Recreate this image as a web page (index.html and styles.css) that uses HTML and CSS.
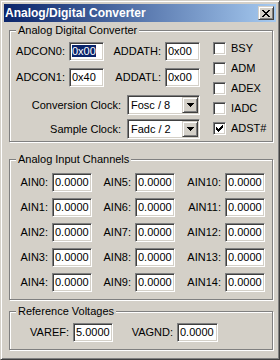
FILE: index.html
```html
<!DOCTYPE html>
<html lang="en">
<head>
    <meta charset="UTF-8">
    <meta name="viewport" content="width=device-width, initial-scale=1.0">
    <title>Analog/Digital Converter</title>
    <link rel="stylesheet" href="styles.css">
</head>
<body>
    <div class="window">
        <div class="titlebar">
            <span class="title">Analog/Digital Converter</span>
            <span class="close-btn">
                <svg width="8" height="7" viewBox="0 0 8 7" shape-rendering="crispEdges"><path d="M0 0h2v1h-2z M6 0h2v1h-2z M1 1h2v1h-2z M5 1h2v1h-2z M2 2h4v1h-4z M3 3h2v1h-2z M2 4h4v1h-4z M1 5h2v1h-2z M5 5h2v1h-2z M0 6h2v1h-2z M6 6h2v1h-2z"/></svg>
            </span>
        </div>

        <div class="client">
            <!-- A/D converter registers -->
            <fieldset class="group">
                <legend>Analog Digital Converter</legend>
                <div class="adc-body">
                    <div class="adc-left">
                        <div class="reg-grid">
                            <span class="lbl">ADCON0:</span><span class="edit"><span class="sel">0x00</span></span>
                            <span class="lbl">ADDATH:</span><span class="edit">0x00</span>
                            <span class="lbl">ADCON1:</span><span class="edit">0x40</span>
                            <span class="lbl">ADDATL:</span><span class="edit">0x00</span>
                        </div>
                        <div class="clock-row conv">
                            <span class="lbl clock-lbl">Conversion Clock:</span>
                            <span class="combo">
                                <span class="combo-text">Fosc / 8</span>
                                <span class="combo-btn"><svg width="7" height="4" viewBox="0 0 7 4" shape-rendering="crispEdges"><path d="M0 0h7v1h-7z M1 1h5v1h-5z M2 2h3v1h-3z M3 3h1v1h-1z"/></svg></span>
                            </span>
                        </div>
                        <div class="clock-row sample">
                            <span class="lbl clock-lbl">Sample Clock:</span>
                            <span class="combo">
                                <span class="combo-text">Fadc / 2</span>
                                <span class="combo-btn"><svg width="7" height="4" viewBox="0 0 7 4" shape-rendering="crispEdges"><path d="M0 0h7v1h-7z M1 1h5v1h-5z M2 2h3v1h-3z M3 3h1v1h-1z"/></svg></span>
                            </span>
                        </div>
                    </div>
                    <div class="flags">
                        <div class="flag"><span class="check"></span>BSY</div>
                        <div class="flag"><span class="check"></span>ADM</div>
                        <div class="flag"><span class="check"></span>ADEX</div>
                        <div class="flag"><span class="check"></span>IADC</div>
                        <div class="flag"><span class="check"><svg width="7" height="7" viewBox="0 0 7 7" shape-rendering="crispEdges"><path d="M6 0h1v1h-1z M5 1h2v1h-2z M0 2h1v1h-1z M4 2h3v1h-3z M0 3h2v1h-2z M3 3h3v1h-3z M0 4h5v1h-5z M1 5h3v1h-3z M2 6h1v1h-1z"/></svg></span>ADST#</div>
                    </div>
                </div>
            </fieldset>

            <!-- input channels -->
            <fieldset class="group channels">
                <legend>Analog Input Channels</legend>
                <div class="ain-grid">
                    <span class="lbl">AIN0:</span><span class="edit">0.0000</span>
                    <span class="lbl">AIN5:</span><span class="edit">0.0000</span>
                    <span class="lbl">AIN10:</span><span class="edit">0.0000</span>
                    <span class="lbl">AIN1:</span><span class="edit">0.0000</span>
                    <span class="lbl">AIN6:</span><span class="edit">0.0000</span>
                    <span class="lbl">AIN11:</span><span class="edit">0.0000</span>
                    <span class="lbl">AIN2:</span><span class="edit">0.0000</span>
                    <span class="lbl">AIN7:</span><span class="edit">0.0000</span>
                    <span class="lbl">AIN12:</span><span class="edit">0.0000</span>
                    <span class="lbl">AIN3:</span><span class="edit">0.0000</span>
                    <span class="lbl">AIN8:</span><span class="edit">0.0000</span>
                    <span class="lbl">AIN13:</span><span class="edit">0.0000</span>
                    <span class="lbl">AIN4:</span><span class="edit">0.0000</span>
                    <span class="lbl">AIN9:</span><span class="edit">0.0000</span>
                    <span class="lbl">AIN14:</span><span class="edit">0.0000</span>
                </div>
            </fieldset>

            <!-- reference voltages -->
            <fieldset class="group refs">
                <legend>Reference Voltages</legend>
                <div class="ref-grid">
                    <span class="lbl">VAREF:</span><span class="edit">5.0000</span>
                    <span class="lbl">VAGND:</span><span class="edit">0.0000</span>
                </div>
            </fieldset>
        </div>
    </div>
</body>
</html>
```

FILE: styles.css
```css
body {
    margin: 0;
    font-family: "Liberation Sans", Arial, sans-serif;
    font-size: 11px;
    color: #000;
    background-color: #d4d0c8;
}

.window {
    width: 280px;
    height: 360px;
    box-sizing: border-box;
    padding: 3px;
    border: 1px solid;
    border-color: #d4d0c8 #404040 #404040 #d4d0c8;
    box-shadow: inset 1px 1px #fff, inset -1px -1px #808080;
    background-color: #d4d0c8;
    display: flex;
    flex-direction: column;
}

.titlebar {
    height: 18px;
    display: flex;
    align-items: center;
    justify-content: space-between;
    padding: 0 2px 0 1px;
    background: linear-gradient(to right, #0a246a, #a6caf0);
}

.title {
    color: #fff;
    font-weight: bold;
    font-size: 12px;
    line-height: 18px;
}

.close-btn,
.combo-btn {
    box-sizing: border-box;
    display: flex;
    align-items: center;
    justify-content: center;
    background-color: #d4d0c8;
    border: 1px solid;
    border-color: #d4d0c8 #404040 #404040 #d4d0c8;
    box-shadow: inset 1px 1px #fff, inset -1px -1px #808080;
}

.close-btn {
    width: 16px;
    height: 14px;
}

.client {
    flex: 1;
    padding: 0 3px 0 5px;
}

.group {
    margin: 2px 0 0 0;
    padding: 0;
    min-width: 0;
    border: 1px solid #808080;
    box-shadow: inset 1px 1px #fff, 1px 1px #fff;
}

.group legend {
    margin-left: 6px;
    padding: 0 2px;
    line-height: 13px;
    background-color: #d4d0c8;
}

.channels {
    margin-top: 11px;
}

.refs {
    margin-top: 5px;
}

.lbl {
    text-align: right;
    padding-right: 4px;
    line-height: 19px;
    white-space: nowrap;
}

.edit {
    box-sizing: border-box;
    height: 19px;
    padding-left: 2px;
    line-height: 17px;
    background-color: #fff;
    border: 1px solid;
    border-color: #808080 #fff #fff #808080;
    box-shadow: inset 1px 1px #404040, inset -1px -1px #d4d0c8;
    white-space: nowrap;
}

.sel {
    background-color: #0a246a;
    color: #fff;
}

/* first group */
.adc-body {
    display: flex;
    align-items: flex-start;
    padding: 5px 0 2px 0;
}

.adc-left {
    width: 190px;
}

.reg-grid {
    display: grid;
    grid-template-columns: 59px 35px 61px 35px;
    grid-auto-rows: 19px;
    row-gap: 7px;
}

.clock-row {
    display: flex;
    height: 20px;
}

.clock-row.conv {
    margin-top: 8px;
}

.clock-row.sample {
    margin-top: 4px;
}

.clock-lbl {
    width: 117px;
    box-sizing: border-box;
    padding-right: 6px;
    line-height: 20px;
}

.combo {
    width: 73px;
    height: 20px;
    box-sizing: border-box;
    display: flex;
    align-items: center;
    background-color: #fff;
    border: 1px solid;
    border-color: #808080 #fff #fff #808080;
    box-shadow: inset 1px 1px #404040, inset -1px -1px #d4d0c8;
}

.combo-text {
    flex: 1;
    padding-left: 3px;
    line-height: 16px;
}

.combo-btn {
    width: 16px;
    height: 16px;
    margin-right: 1px;
}

.flags {
    margin-left: 13px;
    display: flex;
    flex-direction: column;
    gap: 7px;
}

.flag {
    display: flex;
    align-items: center;
    gap: 5px;
    height: 13px;
    line-height: 13px;
}

.check {
    width: 13px;
    height: 13px;
    box-sizing: border-box;
    display: flex;
    align-items: center;
    justify-content: center;
    background-color: #fff;
    border: 1px solid;
    border-color: #808080 #fff #fff #808080;
    box-shadow: inset 1px 1px #404040, inset -1px -1px #d4d0c8;
}

/* channels */
.ain-grid {
    display: grid;
    grid-template-columns: 42px 40px 43px 40px 50px 40px;
    grid-auto-rows: 19px;
    row-gap: 6px;
    padding: 7px 0 7px 0;
}

.ref-grid {
    display: grid;
    grid-template-columns: 63px 40px 64px 41px;
    grid-auto-rows: 19px;
    padding: 5px 0 7px 0;
}
```
